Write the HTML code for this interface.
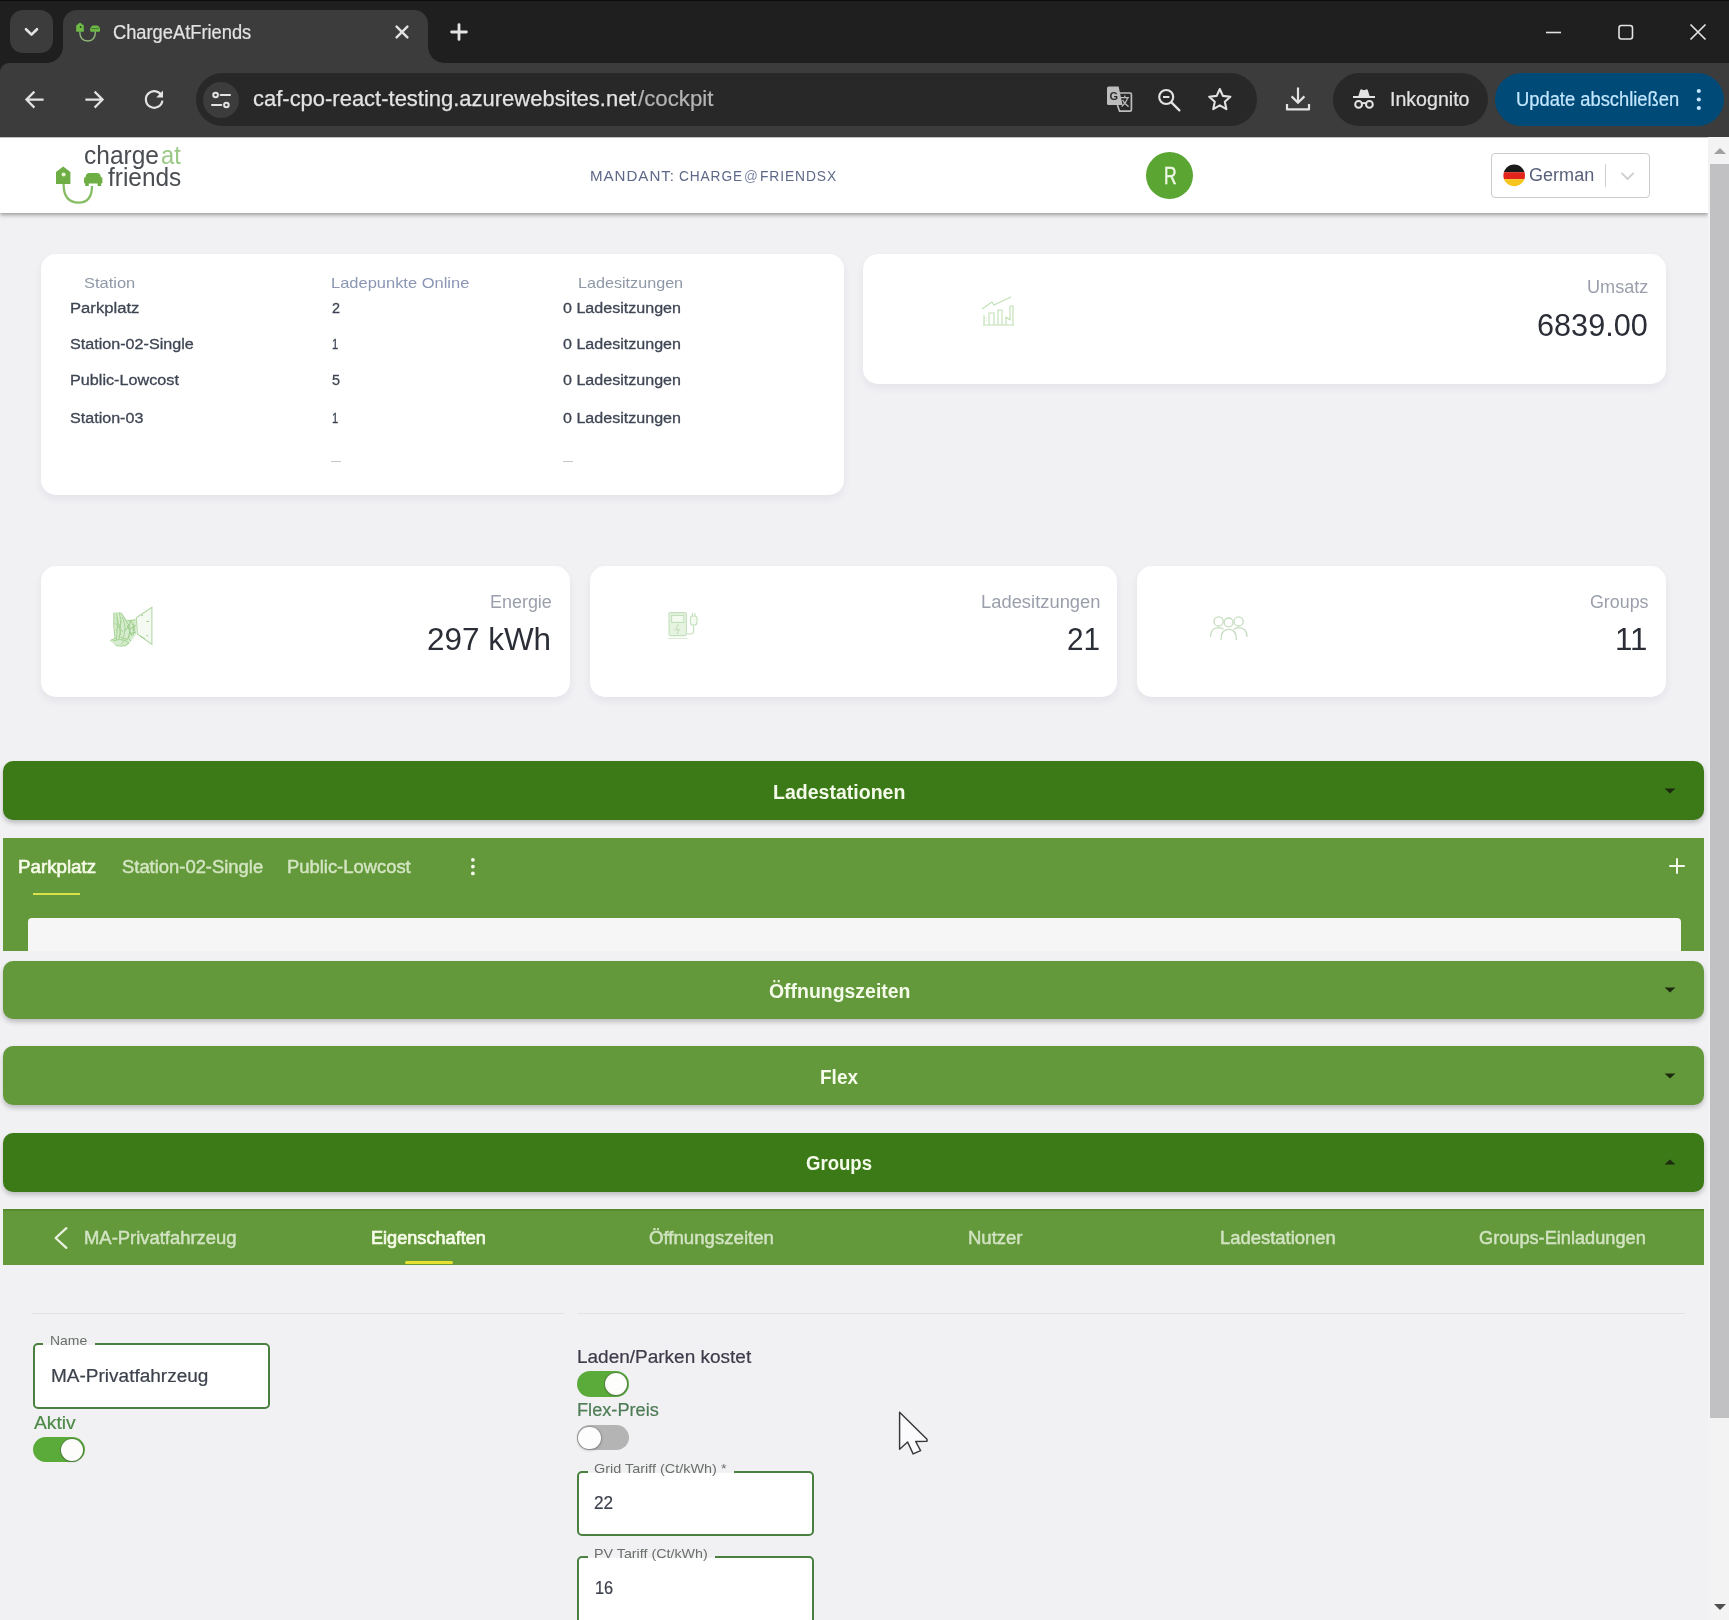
<!DOCTYPE html>
<html lang="de">
<head>
<meta charset="utf-8">
<title>ChargeAtFriends</title>
<style>
*{box-sizing:border-box;margin:0;padding:0}
html,body{width:1729px;height:1620px;overflow:hidden;background:#f1f0f3;font-family:"Liberation Sans",sans-serif;}
#w{position:absolute;left:-20px;top:-20px;width:1769px;height:1660px;background:#f1f0f3;filter:blur(0.5px)}
#in{position:absolute;left:20px;top:20px;width:1729px;height:1620px}
.abs{position:absolute}
.t{position:absolute;white-space:nowrap;line-height:1;transform-origin:0 50%}
#tabstrip{position:absolute;left:-20px;top:-20px;width:1769px;height:100px;background:#1f1f1f;border-top:21px solid #0c0c0c}
#toolbar{position:absolute;left:0;top:63px;width:1749px;height:75px;background:#3c3c3c;border-radius:9px 0 0 0;border-bottom:1px solid #c9c9c9}
#tabsearch{position:absolute;left:10px;top:10px;width:43px;height:43px;border-radius:13px;background:#3c3c3c}
#tab{position:absolute;left:63px;top:10px;width:365px;height:54px;background:#3c3c3c;border-radius:14px 14px 0 0}
#tab:before,#tab:after{content:"";position:absolute;bottom:1px;width:16px;height:16px}
#tab:before{left:-16px;background:radial-gradient(circle at 0 0,rgba(0,0,0,0) 15.5px,#3c3c3c 16px)}
#tab:after{right:-16px;background:radial-gradient(circle at 100% 0,rgba(0,0,0,0) 15.5px,#3c3c3c 16px)}
#omni{position:absolute;left:196px;top:73px;width:1061px;height:53px;border-radius:27px;background:#282828}
#siteinfo{position:absolute;left:203px;top:82px;width:36px;height:36px;border-radius:18px;background:#3c3c3c}
#incog{position:absolute;left:1333px;top:73px;width:155px;height:53px;border-radius:27px;background:#282828}
#update{position:absolute;left:1495px;top:73px;width:229px;height:53px;border-radius:27px;background:#004a77}
#header{position:absolute;left:0;top:138px;width:1708px;height:74.5px;background:#fff;box-shadow:0 2px 4px rgba(0,0,0,.36)}
#sbar{position:absolute;left:1707.5px;top:137px;width:42px;height:1503px;background:#f3f3f4}
#thumb{position:absolute;left:1710px;top:164px;width:40px;height:1253.5px;background:#c1c0c3}
.card{position:absolute;background:#fff;border-radius:15px;box-shadow:0 4px 8px rgba(40,30,70,.06)}
.bar{position:absolute;left:3px;width:1701px;border-radius:10px;box-shadow:0 3px 5px rgba(0,0,0,.22)}
</style>
</head>
<body>
<div id="w"><div id="in">
<div id="tabstrip"></div>
<div id="toolbar"></div>
<div id="tabsearch"></div>
<div id="tab"></div>
<div id="omni"></div>
<div id="siteinfo"></div>
<div id="incog"></div>
<div id="update"></div>
<!-- chrome -->
<svg class="abs" style="left:21px;top:21px" width="22" height="22" viewBox="0 0 22 22"><path d="M5 8.2 L10.5 13.6 L16 8.2" fill="none" stroke="#e3e3e3" stroke-width="2.6" stroke-linecap="round" stroke-linejoin="round"/></svg>
<svg class="abs" style="left:75px;top:21px" width="27" height="22" viewBox="0 0 27 22"><g fill="#6dbb45"><path d="M1.2 4.6 L5 1.4 L8.8 4.6 V10.8 H1.2Z"/><path d="M16 6.6 Q16.4 4.6 18.2 4.6 H22 Q23.8 4.6 24.2 6.6 V8.6 H16Z"/><rect x="15.2" y="6.6" width="9.8" height="4.2" rx="1"/></g><path d="M4.8 10.8 Q4.8 20 12.8 20 Q20.4 20 20.4 10.6" fill="none" stroke="#8db67a" stroke-width="1.4"/><circle cx="5.6" cy="6" r="0.9" fill="#2a3a22"/><path d="M16.6 7.6 H23.6" stroke="#3c5a30" stroke-width="0.8"/></svg>
<div class="t" style="left:113.10px;top:23.05px;font-size:19.5px;color:#e3e3e3;transform:scaleX(0.9375);-webkit-text-stroke:0.2px #e3e3e3;">ChargeAtFriends</div>
<svg class="abs" style="left:392px;top:22px" width="20" height="20" viewBox="0 0 20 20"><path d="M4.6 4.6 L15.4 15.4 M15.4 4.6 L4.6 15.4" stroke="#e3e3e3" stroke-width="2.4" stroke-linecap="round"/></svg>
<svg class="abs" style="left:447px;top:20px" width="24" height="24" viewBox="0 0 24 24"><path d="M12 4.6 V19.4 M4.6 12 H19.4" stroke="#e3e3e3" stroke-width="2.8" stroke-linecap="round"/></svg>
<svg class="abs" style="left:1540px;top:20px" width="180" height="24" viewBox="0 0 180 24"><path d="M6 12.5 H21" stroke="#e3e3e3" stroke-width="1.6"/><rect x="79" y="5.5" width="13.5" height="13.5" rx="2.4" fill="none" stroke="#e3e3e3" stroke-width="1.6"/><path d="M150.5 4.5 L165.5 19.5 M165.5 4.5 L150.5 19.5" stroke="#e3e3e3" stroke-width="1.7"/></svg>
<svg class="abs" style="left:22px;top:87px" width="26" height="26" viewBox="0 0 26 26"><path d="M21.6 12.6 H5 M12.4 4.6 L4.4 12.6 L12.4 20.6" fill="none" stroke="#e3e3e3" stroke-width="2.2" stroke-linejoin="miter"/></svg>
<svg class="abs" style="left:81px;top:87px" width="26" height="26" viewBox="0 0 26 26"><path d="M4.4 12.6 H21 M13.6 4.6 L21.6 12.6 L13.6 20.6" fill="none" stroke="#e3e3e3" stroke-width="2.2" stroke-linejoin="miter"/></svg>
<svg class="abs" style="left:141px;top:87px" width="26" height="26" viewBox="0 0 26 26"><path d="M20.8 9.2 A8.3 8.3 0 1 0 21.4 13.6" fill="none" stroke="#e3e3e3" stroke-width="2.2"/><path d="M22 3.6 V10.4 H15.2Z" fill="#e3e3e3"/></svg>
<svg class="abs" style="left:209px;top:88px" width="24" height="24" viewBox="0 0 24 24"><g fill="none" stroke="#e3e3e3" stroke-width="2"><circle cx="6.6" cy="7" r="2.3"/><path d="M11.6 7 H21" stroke-linecap="round"/><circle cx="17.4" cy="17" r="2.3"/><path d="M3 17 H12.4" stroke-linecap="round"/></g></svg>
<div class="t" style="left:253.00px;top:88.07px;font-size:22.5px;color:#e3e3e3;transform:scaleX(0.9765);-webkit-text-stroke:0.25px #e3e3e3;">caf-cpo-react-testing.azurewebsites.net</div>
<div class="t" style="left:637.50px;top:88.07px;font-size:22.5px;color:#b4b4b4;transform:scaleX(0.9898);-webkit-text-stroke:0.2px #b4b4b4;">/cockpit</div>
<svg class="abs" style="left:1105px;top:85px" width="28" height="28" viewBox="0 0 28 28"><path d="M2 3.2 Q2 1.6 3.6 1.6 H13.6 L17.6 20 H3.6 Q2 20 2 18.4Z" fill="#bdbdbd"/><path d="M14 8 H25 Q26.4 8 26.4 9.4 V24.8 Q26.4 26.2 25 26.2 H14.6 L12.4 20" fill="none" stroke="#bdbdbd" stroke-width="1.7"/><path d="M15.8 12.6 H24 M19.8 10.6 V12.6 M22.6 12.6 Q21.4 17.6 16.6 21.4 M17.6 15 Q19.4 19 23.6 21.6" fill="none" stroke="#bdbdbd" stroke-width="1.3"/><text x="4.4" y="15.2" font-family="Liberation Sans" font-weight="700" font-size="11" fill="#2b2b2b">G</text></svg>
<svg class="abs" style="left:1155px;top:86px" width="28" height="28" viewBox="0 0 28 28"><circle cx="11.2" cy="11" r="7" fill="none" stroke="#e3e3e3" stroke-width="2.1"/><path d="M16.4 16.4 L24.4 24.4" stroke="#e3e3e3" stroke-width="2.3" stroke-linecap="round"/><path d="M8 11 H14.4" stroke="#e3e3e3" stroke-width="2"/></svg>
<svg class="abs" style="left:1206px;top:86px" width="28" height="26" viewBox="0 0 28 26"><path d="M13.8 3 L16.9 9.9 L24.4 10.7 L18.8 15.7 L20.4 23.1 L13.8 19.3 L7.2 23.1 L8.8 15.7 L3.2 10.7 L10.7 9.9Z" fill="none" stroke="#e3e3e3" stroke-width="2.1" stroke-linejoin="round"/></svg>
<svg class="abs" style="left:1284px;top:85px" width="28" height="28" viewBox="0 0 28 28"><path d="M14 2.4 V17.6 M7.6 11.4 L14 17.8 L20.4 11.4" fill="none" stroke="#e3e3e3" stroke-width="2.2"/><path d="M3 19 V24.4 H25 V19" fill="none" stroke="#e3e3e3" stroke-width="2.2" stroke-linejoin="round"/></svg>
<svg class="abs" style="left:1351px;top:87px" width="26" height="24" viewBox="0 0 26 24"><path d="M7.4 9 L9.2 3.2 Q9.6 2 10.8 2.4 L13 3.2 L15.2 2.4 Q16.4 2 16.8 3.2 L18.6 9Z" fill="#e3e3e3"/><path d="M2 10 H24" stroke="#e3e3e3" stroke-width="2"/><circle cx="7.6" cy="17.4" r="3.4" fill="none" stroke="#e3e3e3" stroke-width="2"/><circle cx="18.4" cy="17.4" r="3.4" fill="none" stroke="#e3e3e3" stroke-width="2"/><path d="M11 16.6 Q13 15.4 15 16.6" fill="none" stroke="#e3e3e3" stroke-width="1.8"/></svg>
<div class="t" style="left:1389.50px;top:89.75px;font-size:19.5px;color:#e3e3e3;transform:scaleX(1.0042);-webkit-text-stroke:0.2px #e3e3e3;">Inkognito</div>
<div class="t" style="left:1515.80px;top:89.65px;font-size:19.5px;color:#c2e7ff;transform:scaleX(0.9409);-webkit-text-stroke:0.2px #c2e7ff;">Update abschließen</div>
<svg class="abs" style="left:1694px;top:86px" width="10" height="28" viewBox="0 0 10 28"><g fill="#c2e7ff"><circle cx="4.8" cy="5" r="2.1"/><circle cx="4.8" cy="13.5" r="2.1"/><circle cx="4.8" cy="22" r="2.1"/></g></svg>
<!-- page -->
<div id="header"></div>
<div id="sbar"></div>
<div id="thumb"></div>
<svg class="abs" style="left:52px;top:164px" width="54" height="44" viewBox="0 0 54 44"><g fill="#6fae44"><path d="M4 8 L11.2 2.6 L18.4 8 V20 H4Z"/><path d="M33.4 13.4 Q34 9 37.4 9 H45 Q48.4 9 49 13.4 V17 H33.4Z"/><rect x="32" y="13.2" width="18.4" height="6.4" rx="1.4"/><rect x="33.2" y="18" width="3.6" height="4"/><rect x="45.6" y="18" width="3.6" height="4"/></g><circle cx="11.6" cy="10.4" r="2" fill="#e9f6d8"/><path d="M11.6 20 Q11.6 38.6 26.6 38.6 Q40 38.6 40 22" fill="none" stroke="#86bd64" stroke-width="2.3"/></svg>
<div class="t" style="left:84.20px;top:142.50px;font-size:25.5px;color:#4a4d51;transform:scaleX(0.9612);">charge</div>
<div class="t" style="left:161.40px;top:143.00px;font-size:25.5px;color:#9bc985;transform:scaleX(0.9299);">at</div>
<div class="t" style="left:108.40px;top:165.00px;font-size:25.5px;color:#4a4d51;transform:scaleX(0.9569);">friends</div>
<div class="t" style="left:590.00px;top:168.00px;font-size:15.5px;color:#5e6888;transform:scaleX(0.9744);letter-spacing:1px;">MANDANT:</div>
<div class="t" style="left:679.30px;top:168.00px;font-size:15.5px;color:#5e6888;transform:scaleX(0.8845);letter-spacing:1px;">CHARGE</div>
<div class="t" style="left:744.40px;top:168.80px;font-size:14.5px;color:#8088a6;transform:scaleX(0.9377);">@</div>
<div class="t" style="left:760.20px;top:168.00px;font-size:15.5px;color:#5e6888;transform:scaleX(0.8916);letter-spacing:1px;">FRIENDSX</div>
<div class="abs" style="left:1146px;top:151.5px;width:47px;height:47px;border-radius:50%;background:#5ba532"></div>
<div class="t" style="left:1163.80px;top:164.53px;font-size:23px;color:#eef7e4;transform:scaleX(0.7609);-webkit-text-stroke:0.5px #eef7e4;">R</div>
<div class="abs" style="left:1490.6px;top:153px;width:159px;height:44.8px;border:1.3px solid #cbcbcf;border-radius:4px;background:#fff"></div>
<svg class="abs" style="left:1503px;top:164px" width="23" height="23" viewBox="0 0 23 23"><defs><clipPath id="fc"><circle cx="11.2" cy="11.4" r="10.8"/></clipPath></defs><g clip-path="url(#fc)"><rect x="0" y="0" width="23" height="8.2" fill="#1a1a1a"/><rect x="0" y="8.2" width="23" height="7" fill="#e2241b"/><rect x="0" y="15.2" width="23" height="8" fill="#f6c51d"/></g></svg>
<div class="t" style="left:1529.00px;top:166.18px;font-size:18px;color:#59617a;transform:scaleX(1.0034);">German</div>
<div class="abs" style="left:1604.8px;top:164.3px;width:1.2px;height:22.7px;background:#cfcfcf;"></div>
<svg class="abs" style="left:1618px;top:168px" width="20" height="16" viewBox="0 0 20 16"><path d="M4 5.4 L9.6 11 L15.2 5.4" fill="none" stroke="#cfcfcf" stroke-width="1.9" stroke-linecap="round" stroke-linejoin="round"/></svg>
<!-- cards -->
<div class="card" style="left:40.8px;top:253.5px;width:803.0px;height:241.7px"></div>
<div class="card" style="left:862.6px;top:253.5px;width:803.6px;height:130.3px"></div>
<div class="card" style="left:40.8px;top:565.8px;width:529.2px;height:130.8px"></div>
<div class="card" style="left:590.4px;top:565.8px;width:527.1px;height:130.8px"></div>
<div class="card" style="left:1136.5px;top:565.8px;width:529.7px;height:130.8px"></div>
<div class="t" style="left:84.20px;top:274.95px;font-size:15px;color:#8f98a6;transform:scaleX(1.0979);">Station</div>
<div class="t" style="left:331.30px;top:274.95px;font-size:15px;color:#8a96b3;transform:scaleX(1.0983);">Ladepunkte Online</div>
<div class="t" style="left:577.90px;top:274.95px;font-size:15px;color:#8f98a6;transform:scaleX(1.0771);">Ladesitzungen</div>
<div class="t" style="left:70.30px;top:299.70px;font-size:15.5px;color:#3e4553;transform:scaleX(1.0737);-webkit-text-stroke:0.3px #3e4553;">Parkplatz</div>
<div class="t" style="left:331.60px;top:299.70px;font-size:15.5px;color:#3e4553;transform:scaleX(0.9300);-webkit-text-stroke:0.3px #3e4553;">2</div>
<div class="t" style="left:563.30px;top:299.70px;font-size:15.5px;color:#3e4553;transform:scaleX(1.0372);-webkit-text-stroke:0.3px #3e4553;">0 Ladesitzungen</div>
<div class="t" style="left:70.30px;top:336.30px;font-size:15.5px;color:#3e4553;transform:scaleX(1.0405);-webkit-text-stroke:0.3px #3e4553;">Station-02-Single</div>
<div class="t" style="left:332.40px;top:336.30px;font-size:15.5px;color:#3e4553;transform:scaleX(0.7207);-webkit-text-stroke:0.3px #3e4553;">1</div>
<div class="t" style="left:563.30px;top:336.30px;font-size:15.5px;color:#3e4553;transform:scaleX(1.0372);-webkit-text-stroke:0.3px #3e4553;">0 Ladesitzungen</div>
<div class="t" style="left:70.30px;top:372.20px;font-size:15.5px;color:#3e4553;transform:scaleX(1.0447);-webkit-text-stroke:0.3px #3e4553;">Public-Lowcost</div>
<div class="t" style="left:331.60px;top:372.20px;font-size:15.5px;color:#3e4553;transform:scaleX(0.9300);-webkit-text-stroke:0.3px #3e4553;">5</div>
<div class="t" style="left:563.30px;top:372.20px;font-size:15.5px;color:#3e4553;transform:scaleX(1.0372);-webkit-text-stroke:0.3px #3e4553;">0 Ladesitzungen</div>
<div class="t" style="left:70.30px;top:409.90px;font-size:15.5px;color:#3e4553;transform:scaleX(1.0385);-webkit-text-stroke:0.3px #3e4553;">Station-03</div>
<div class="t" style="left:332.40px;top:409.90px;font-size:15.5px;color:#3e4553;transform:scaleX(0.7207);-webkit-text-stroke:0.3px #3e4553;">1</div>
<div class="t" style="left:563.30px;top:409.90px;font-size:15.5px;color:#3e4553;transform:scaleX(1.0372);-webkit-text-stroke:0.3px #3e4553;">0 Ladesitzungen</div>
<div class="abs" style="left:331px;top:460.8px;width:9.5px;height:1.7px;background:#c4c4ca;"></div>
<div class="abs" style="left:563px;top:460.8px;width:9.5px;height:1.7px;background:#c4c4ca;"></div>
<div class="t" style="left:1586.60px;top:278.82px;font-size:17.5px;color:#9a9fab;transform:scaleX(1.0350);">Umsatz</div>
<div class="t" style="left:1537.20px;top:309.91px;font-size:31px;color:#2b2e36;transform:scaleX(0.9887);">6839.00</div>
<div class="t" style="left:490.30px;top:593.72px;font-size:17.5px;color:#9a9fab;transform:scaleX(1.0251);">Energie</div>
<div class="t" style="left:426.80px;top:624.01px;font-size:31px;color:#2b2e36;transform:scaleX(1.0139);">297 kWh</div>
<div class="t" style="left:980.50px;top:593.72px;font-size:17.5px;color:#9a9fab;transform:scaleX(1.0497);">Ladesitzungen</div>
<div class="t" style="left:1066.50px;top:624.01px;font-size:31px;color:#2b2e36;transform:scaleX(0.9590);">21</div>
<div class="t" style="left:1590.00px;top:593.72px;font-size:17.5px;color:#9a9fab;transform:scaleX(1.0192);">Groups</div>
<div class="t" style="left:1614.50px;top:624.01px;font-size:31px;color:#2b2e36;transform:scaleX(1.0081);">11</div>
<svg class="abs" style="left:980px;top:296px" width="36" height="32" viewBox="0 0 36 32"><g fill="none" stroke="#bfe0b4" stroke-width="1.1"><path d="M2 13 L12 6 L14 9 L31 1"/><path d="M4 29 V19 M9 29 V17 H14 V29 M18 29 V14 H22 V29 M26 29 V21 L30 24 V10 H33 V29 M3 29 H34"/><path d="M4 22 H7 M4 25 H7" stroke-dasharray="1 1.4"/></g></svg>
<svg class="abs" style="left:108px;top:605px" width="48" height="46" viewBox="0 0 48 46"><path d="M5.1 7.6 L13.2 7 L19 15 L28.3 14 V29 L22.5 37 L17.9 41.7 L7.4 40.5 L1.7 35.3 L6.9 32.4Z" fill="#d6ecce"/><path d="M28.3 12.8 L43.9 2.4 V39.4 L29.4 29Z" fill="#f4faf1" stroke="#b4d8a8" stroke-width="1.1"/><g fill="none" stroke="#a7d495" stroke-width="1"><path d="M6 8 Q5 20 7 33 M8.6 7.6 Q10.4 20 8.4 36 M11.4 7.4 Q14 18 11 34 M13 8 L18 16 L27 15 M14 12 Q20 22 14 36 M5 36 Q14 32 21 38 Q14 43 7.6 40 M2.4 35.6 L8 33 M9 12 L13 30 M7 18 L15 27 M8 26 L14 16 M10 31 L20 35 M13 39 L22 31"/><path d="M18 17 Q24 20 21 30 Q19 34 23 36 M21 15.6 Q27 17 25 26 M19 20 L24 31 M17 26 Q21 22 23 16 M24 19 Q28 22 25 30 M22 24 L28 20 M22 29 L28 27 M33 9.6 L35 11 M38.4 16.4 L41 16.4 M32 31 L37 34 M38.4 30.6 L40 30.6" stroke="#9ccc8a"/></g></svg>
<svg class="abs" style="left:666px;top:610px" width="34" height="32" viewBox="0 0 34 32"><g fill="#e5f3e0" stroke="#c3e0bc" stroke-width="1.1"><rect x="3" y="2.6" width="17.4" height="23" rx="1.6"/><rect x="5.6" y="5.4" width="12.2" height="7" fill="#f3faf0"/><rect x="24.4" y="6" width="6.6" height="9" rx="2.6" fill="#f3faf0"/><path d="M26.4 6 V3 M29 6 V3 M27.6 15 V21 Q27.6 24 24 24 H20.4" fill="none"/><path d="M12.6 14 L9.6 19.6 H13 L11 24" fill="none"/><path d="M2.4 28.4 H21.4" fill="none" stroke="#d5e9d0"/></g></svg>
<svg class="abs" style="left:1208px;top:613px" width="42" height="30" viewBox="0 0 42 30"><g fill="none" stroke="#c5dcc0" stroke-width="1.3"><circle cx="10.6" cy="8.4" r="4.6"/><circle cx="20.6" cy="9.4" r="4.4"/><circle cx="30.6" cy="8.4" r="4.6"/><path d="M2.6 24 Q2.6 14.6 10.6 14.6 Q14 14.6 15.6 16.4 M39 24 Q39 14.6 30.6 14.6 Q27.4 14.6 25.6 16.4 M13 27 Q13 16.4 20.6 16.4 Q28.4 16.4 28.4 27"/></g></svg>
<!-- bars -->
<div class="bar" style="top:761.3px;height:58.9px;background:#3c7917"></div>
<div class="t" style="left:773.00px;top:781.85px;font-size:20px;color:#f4fbea;transform:scaleX(0.9764);font-weight:700;">Ladestationen</div>
<svg class="abs" style="left:1663px;top:787.4px" width="14" height="8" viewBox="0 0 14 8"><path d="M1.6 1.4 L7 6.4 L12.4 1.4Z" fill="#1c2a10"/></svg>
<div class="abs" style="left:3px;top:838.3px;width:1701px;height:112.7px;background:#63993b;"></div>
<div class="abs" style="left:27.5px;top:918.3px;width:1653.5px;height:33px;background:#f5f6f5;border-radius:4px 4px 0 0"></div>
<div class="t" style="left:17.90px;top:858.18px;font-size:18px;color:#f6fbe8;transform:scaleX(1.0405);-webkit-text-stroke:0.6px #f6fbe8;">Parkplatz</div>
<div class="t" style="left:121.50px;top:858.18px;font-size:18px;color:#d3e4c1;transform:scaleX(1.0220);-webkit-text-stroke:0.45px #d3e4c1;">Station-02-Single</div>
<div class="t" style="left:286.90px;top:858.18px;font-size:18px;color:#d3e4c1;transform:scaleX(1.0219);-webkit-text-stroke:0.45px #d3e4c1;">Public-Lowcost</div>
<div class="abs" style="left:33.3px;top:892.7px;width:46.7px;height:2.2px;background:#d9e24a;"></div>
<svg class="abs" style="left:468px;top:855px" width="10" height="24" viewBox="0 0 10 24"><g fill="#f3f8ec"><circle cx="4.9" cy="4.8" r="1.9"/><circle cx="4.9" cy="11.6" r="1.9"/><circle cx="4.9" cy="18.4" r="1.9"/></g></svg>
<svg class="abs" style="left:1667px;top:856px" width="20" height="20" viewBox="0 0 20 20"><path d="M10 2.2 V17.8 M2.2 10 H17.8" stroke="#f3f8ec" stroke-width="2"/></svg>
<div class="bar" style="top:961px;height:57.6px;background:#63993b"></div>
<div class="t" style="left:768.50px;top:980.90px;font-size:20px;color:#f4fbea;transform:scaleX(0.9718);font-weight:700;">Öffnungszeiten</div>
<svg class="abs" style="left:1663px;top:986.4px" width="14" height="8" viewBox="0 0 14 8"><path d="M1.6 1.4 L7 6.4 L12.4 1.4Z" fill="#1c2a10"/></svg>
<div class="bar" style="top:1046.2px;height:58.8px;background:#63993b"></div>
<div class="t" style="left:820.00px;top:1066.70px;font-size:20px;color:#f4fbea;transform:scaleX(0.9500);font-weight:700;">Flex</div>
<svg class="abs" style="left:1663px;top:1072.2px" width="14" height="8" viewBox="0 0 14 8"><path d="M1.6 1.4 L7 6.4 L12.4 1.4Z" fill="#1c2a10"/></svg>
<div class="bar" style="top:1132.6px;height:59.0px;background:#3c7917"></div>
<div class="t" style="left:806.00px;top:1153.20px;font-size:20px;color:#f4fbea;transform:scaleX(0.9283);font-weight:700;">Groups</div>
<svg class="abs" style="left:1663px;top:1158.1px" width="14" height="8" viewBox="0 0 14 8"><path d="M1.6 6.6 L7 1.6 L12.4 6.6Z" fill="#1c2a10"/></svg>
<div class="abs" style="left:3px;top:1208.8px;width:1701px;height:56.4px;background:#63993b;border-top:2px solid #548c2e;"></div>
<svg class="abs" style="left:50px;top:1225px" width="22" height="26" viewBox="0 0 22 26"><path d="M16.4 3.2 L5.6 13 L16.4 22.8" fill="none" stroke="#e8f1de" stroke-width="2.3" stroke-linecap="round" stroke-linejoin="round"/></svg>
<div class="t" style="left:84.20px;top:1229.18px;font-size:18px;color:#d2e3c2;transform:scaleX(1.0232);-webkit-text-stroke:0.45px #d2e3c2;">MA-Privatfahrzeug</div>
<div class="t" style="left:370.80px;top:1229.18px;font-size:18px;color:#f6fbe8;transform:scaleX(1.0068);-webkit-text-stroke:0.7px #f6fbe8;">Eigenschaften</div>
<div class="abs" style="left:405.4px;top:1260.8px;width:47.2px;height:3px;background:#e6e032;border-radius:1.5px;"></div>
<div class="t" style="left:649.00px;top:1229.18px;font-size:18px;color:#d2e3c2;transform:scaleX(1.0349);-webkit-text-stroke:0.45px #d2e3c2;">Öffnungszeiten</div>
<div class="t" style="left:967.50px;top:1229.18px;font-size:18px;color:#d2e3c2;transform:scaleX(1.0281);-webkit-text-stroke:0.45px #d2e3c2;">Nutzer</div>
<div class="t" style="left:1220.30px;top:1229.18px;font-size:18px;color:#d2e3c2;transform:scaleX(1.0245);-webkit-text-stroke:0.45px #d2e3c2;">Ladestationen</div>
<div class="t" style="left:1478.50px;top:1229.18px;font-size:18px;color:#d2e3c2;transform:scaleX(1.0100);-webkit-text-stroke:0.45px #d2e3c2;">Groups-Einladungen</div>
<!-- form -->
<div class="abs" style="left:32px;top:1313px;width:532px;height:1.4px;background:#e2e2e5;"></div>
<div class="abs" style="left:577.5px;top:1313px;width:1107.5px;height:1.4px;background:#e2e2e5;"></div>
<div class="abs" style="left:33px;top:1343px;width:237.0px;height:65.6px;border:2px solid #4a8040;border-radius:5px;background:#fff"></div>
<div class="abs" style="left:43.4px;top:1342.5px;width:51.199999999999996px;height:3px;background:linear-gradient(#f1f0f3 0,#f1f0f3 45%,#fff 75%);"></div>
<div class="t" style="left:49.60px;top:1334.23px;font-size:13px;color:#6a6f6a;transform:scaleX(1.0717);">Name</div>
<div class="t" style="left:50.90px;top:1366.98px;font-size:18px;color:#3c414c;transform:scaleX(1.0561);-webkit-text-stroke:0.2px #3c414c;">MA-Privatfahrzeug</div>
<div class="t" style="left:34.20px;top:1414.18px;font-size:18px;color:#4c8a46;transform:scaleX(1.0701);-webkit-text-stroke:0.2px #4c8a46;">Aktiv</div>
<div class="abs" style="left:32.8px;top:1437px;width:52.4px;height:25.4px;border-radius:13px;background:#5aab3a"></div>
<div class="abs" style="left:61.0px;top:1438.5px;width:22.4px;height:22.4px;border-radius:50%;background:#fdfefb;box-shadow:0 0 0 1px rgba(80,105,70,.55),0 1px 2px rgba(0,0,0,.2)"></div>
<div class="t" style="left:577.00px;top:1348.18px;font-size:18px;color:#3e3a49;transform:scaleX(1.0548);-webkit-text-stroke:0.2px #3e3a49;">Laden/Parken kostet</div>
<div class="abs" style="left:576.6px;top:1371.2px;width:52.4px;height:25.4px;border-radius:13px;background:#5aab3a"></div>
<div class="abs" style="left:604.8px;top:1372.7px;width:22.4px;height:22.4px;border-radius:50%;background:#fdfefb;box-shadow:0 0 0 1px rgba(80,105,70,.55),0 1px 2px rgba(0,0,0,.2)"></div>
<div class="t" style="left:577.00px;top:1401.18px;font-size:18px;color:#4d7c55;transform:scaleX(1.0099);-webkit-text-stroke:0.2px #4d7c55;">Flex-Preis</div>
<div class="abs" style="left:576.6px;top:1425px;width:52.4px;height:25.4px;border-radius:13px;background:#b4b4b4"></div>
<div class="abs" style="left:578.4px;top:1426.5px;width:22.4px;height:22.4px;border-radius:50%;background:#fdfdfd;box-shadow:0 0 0 1px rgba(120,120,120,.35),0 1px 3px rgba(0,0,0,.3)"></div>
<div class="abs" style="left:577px;top:1471.4px;width:237.0px;height:64.6px;border:2px solid #4a8040;border-radius:5px;background:#fff"></div>
<div class="abs" style="left:587.7px;top:1470.9px;width:146.79999999999995px;height:3px;background:linear-gradient(#f1f0f3 0,#f1f0f3 45%,#fff 75%);"></div>
<div class="t" style="left:594.00px;top:1462.38px;font-size:13.5px;color:#6a6f6a;transform:scaleX(1.0686);">Grid Tariff (Ct/kWh) *</div>
<div class="t" style="left:593.70px;top:1494.18px;font-size:18px;color:#3c414c;transform:scaleX(0.9560);-webkit-text-stroke:0.2px #3c414c;">22</div>
<div class="abs" style="left:577px;top:1556px;width:237.0px;height:84.0px;border:2px solid #4a8040;border-radius:5px;background:#fff"></div>
<div class="abs" style="left:587.7px;top:1555.5px;width:127.69999999999993px;height:3px;background:linear-gradient(#f1f0f3 0,#f1f0f3 45%,#fff 75%);"></div>
<div class="t" style="left:594.00px;top:1546.98px;font-size:13.5px;color:#6a6f6a;transform:scaleX(1.0574);">PV Tariff (Ct/kWh)</div>
<div class="t" style="left:594.60px;top:1579.18px;font-size:18px;color:#3c414c;transform:scaleX(0.9109);-webkit-text-stroke:0.2px #3c414c;">16</div>
<svg class="abs" style="left:897px;top:1410px" width="34" height="48" viewBox="0 0 34 48"><path d="M2.6 2.3 V39.3 L10.6 32 L16.1 43.9 L23.6 40.7 L18.7 31.5 L30 31.2 V29.2Z" fill="#fbfafc" stroke="#38383a" stroke-width="1.45" stroke-linejoin="round"/></svg>
<svg class="abs" style="left:1712.2px;top:146.4px" width="16" height="10" viewBox="0 0 16 10"><path d="M2 8 L8 2 L14 8Z" fill="#a0a0a2"/></svg>
<svg class="abs" style="left:1712px;top:1602px" width="16" height="10" viewBox="0 0 16 10"><path d="M2 2 L8 8 L14 2Z" fill="#505050"/></svg>
</div></div>
</body>
</html>
